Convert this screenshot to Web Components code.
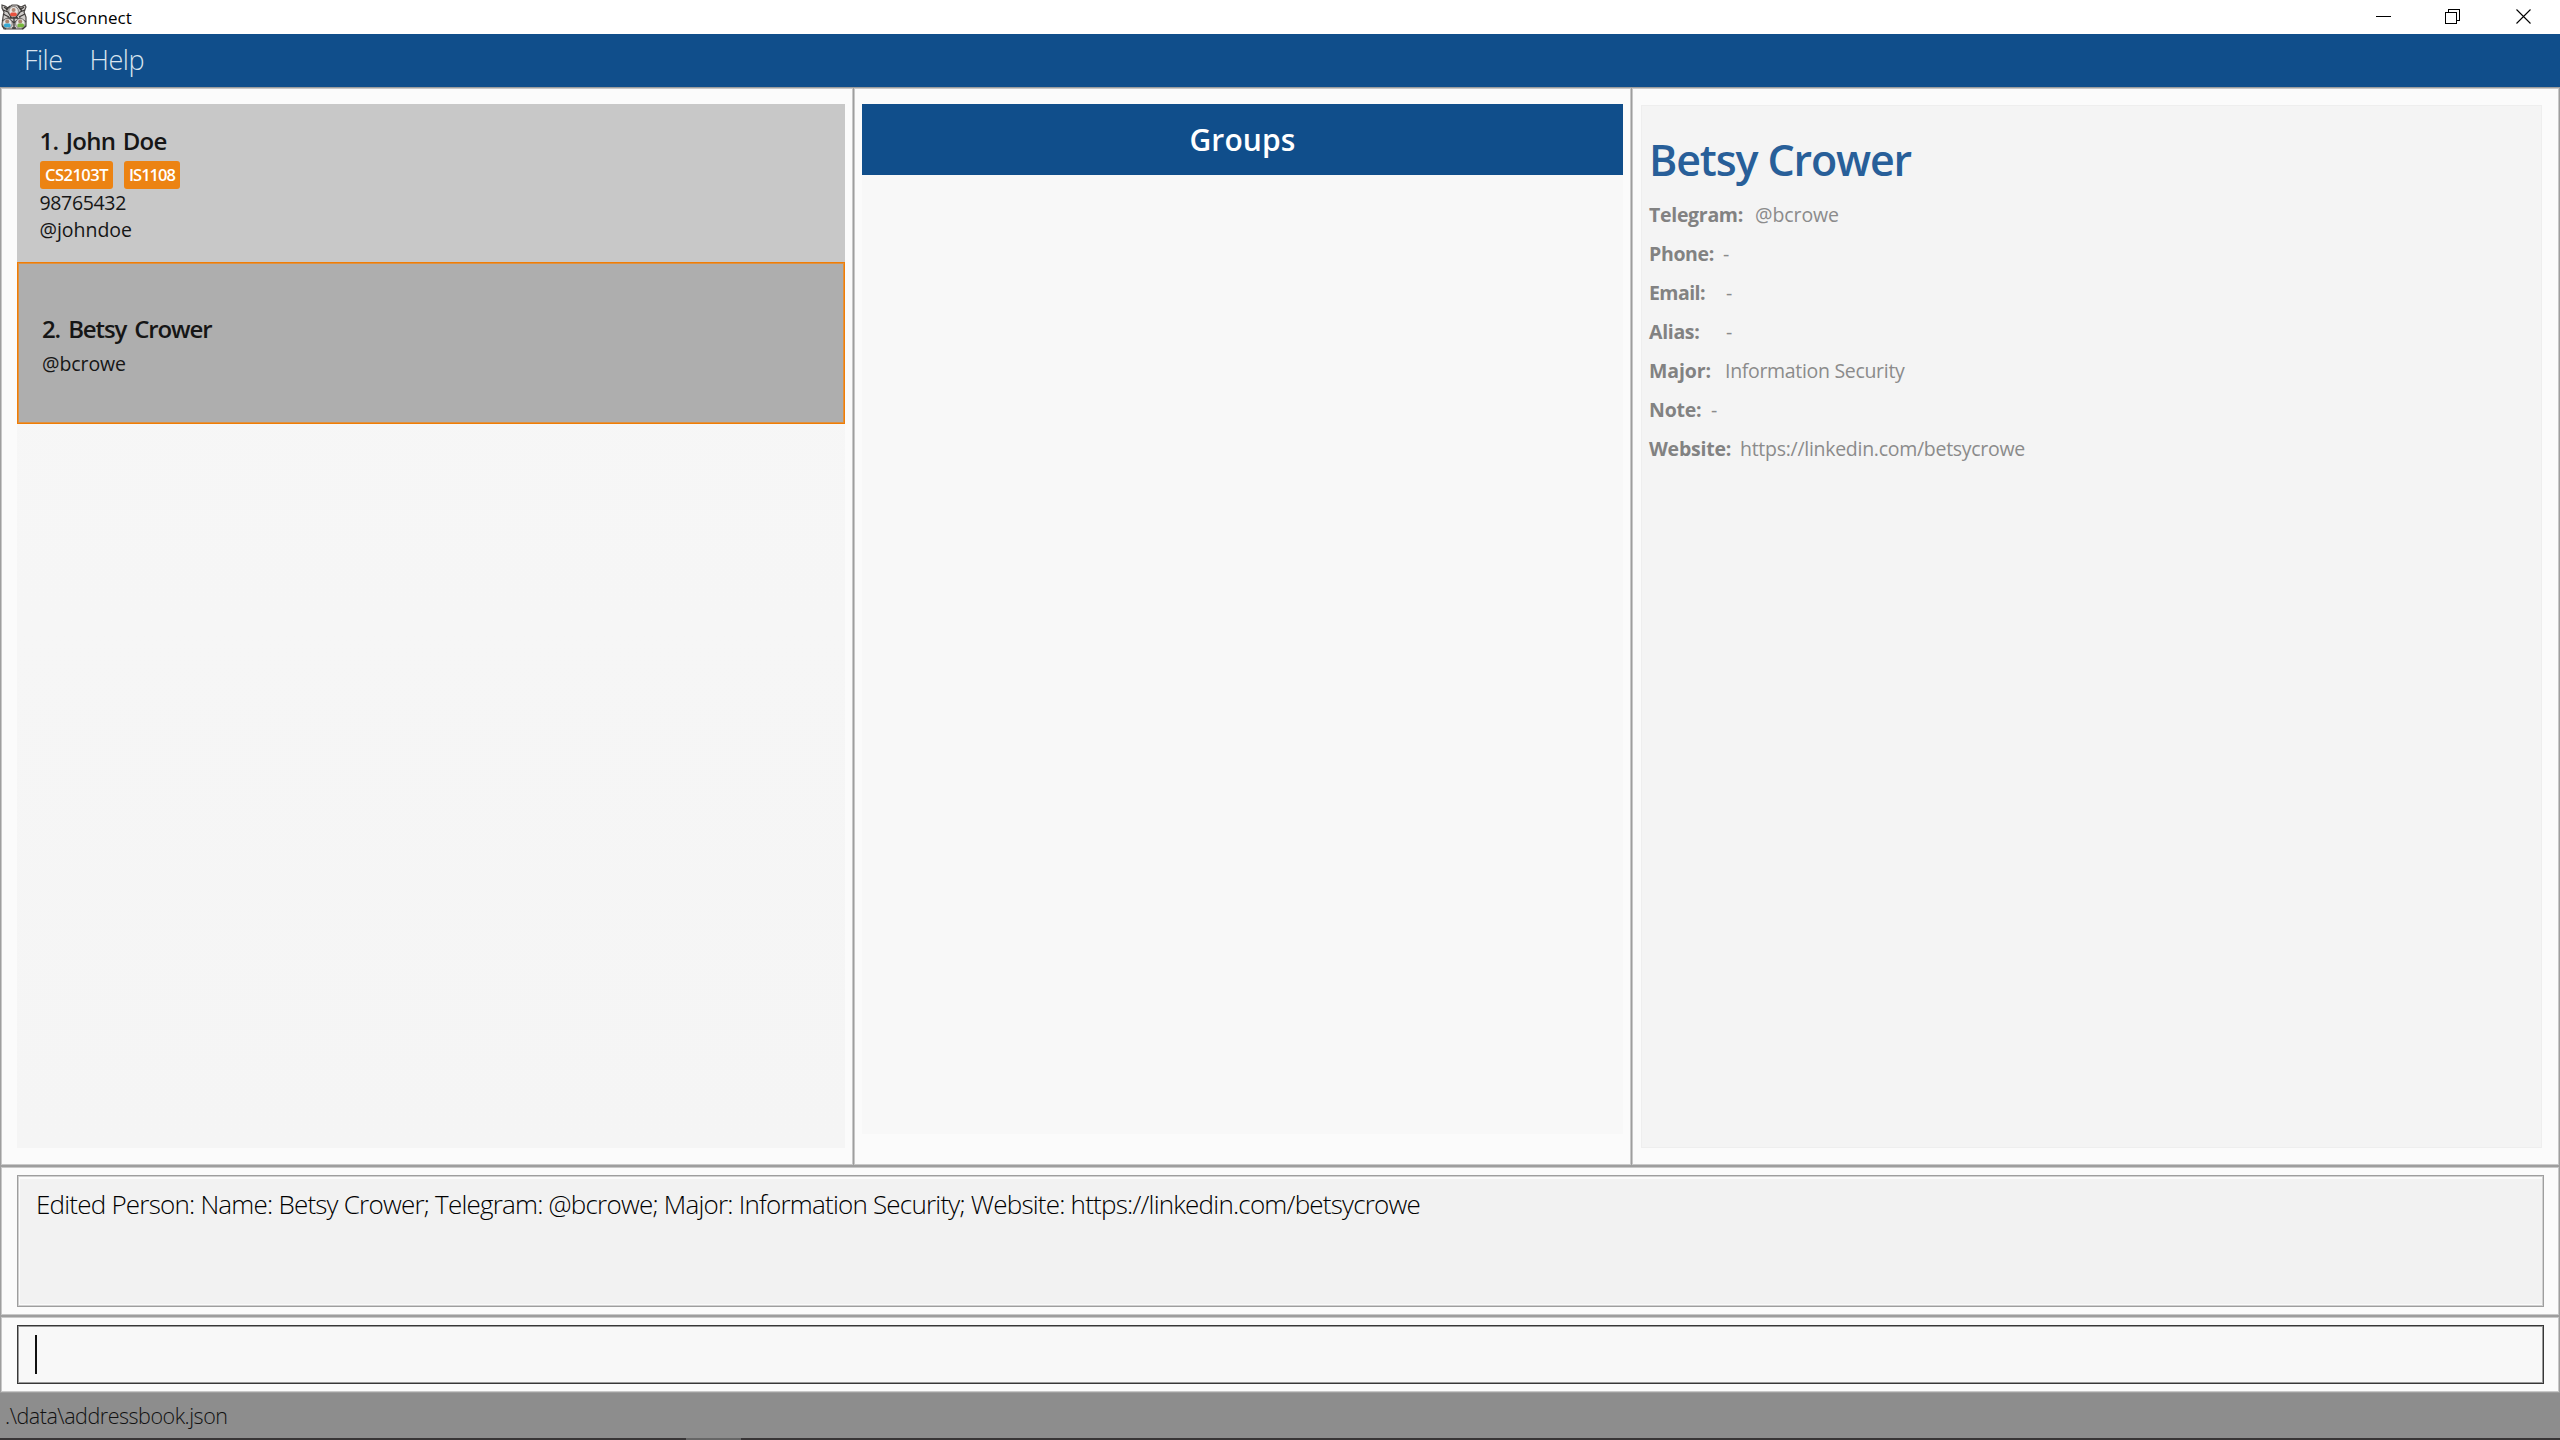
<!DOCTYPE html>
<html lang="en"><head><meta charset="utf-8"><title>NUSConnect</title>
<style>
html,body{margin:0;height:100%;overflow:hidden;background:#fbfbfb}
body{font-family:"Open Sans","Noto Sans",sans-serif;color:#1c1c1c}
</style></head><body><app-window></app-window>
<script>
const define=(name,html,init)=>{
  const t=document.createElement('template');t.innerHTML='<style>:host{display:block;box-sizing:border-box}*{box-sizing:border-box}</style>'+html;
  customElements.define(name,class extends HTMLElement{
    constructor(){super();this.attachShadow({mode:'open'}).append(t.content.cloneNode(true));}
    connectedCallback(){if(init)init.call(this,this.shadowRoot);}
  });
};

/* One line of text spread over a given width (attributes: w, size, weight, line, gap) */
define('ui-text','<style>:host{display:block;flex:none;white-space:pre}span{display:inline-block}</style><span><slot></slot></span>',function(r){
  const s=this.style,w=+this.getAttribute('w'),n=this.textContent.length,line=this.getAttribute('line');
  s.fontSize=this.getAttribute('size')+'px';s.fontWeight=this.getAttribute('weight')||400;
  s.lineHeight=line+'px';s.height=line+'px';s.wordSpacing=(this.getAttribute('gap')||0)+'px';
  const nat=r.querySelector('span').getBoundingClientRect().width;
  if(w&&n>1)s.letterSpacing=((w-nat)/n).toFixed(3)+'px';
});

define('app-logo',`<style>:host{width:26px;height:26px;flex:none}svg{display:block}</style>
<svg width="26" height="26" viewBox="0 0 26 26">
<path d="M1 1l3 1 3 2 4-3h5l4 2 4-2 1 2-2 5 2 5v9l-3 3H3l-2-4 1-8 1-5-2-4z" fill="#cfccca" stroke="#4c4846" stroke-width="1.2"/>
<path d="M2 6l5 2 3 5-6 4M24 6l-5 2-4 5 6 4M9 2l-4 4M17 2l4 5M1 17l6-3 6 5 6-5 6 4M13 13v12M1 22l4 3M25 22l-4 3M2 10l6 3M24 10l-6 3M3 3l4 3M23 3l-4 3M9 14h8M11 24h4" fill="none" stroke="#3d3a38" stroke-width="1.3"/>
<circle cx="12.600" cy="7.300" r="4.800" fill="#e9e6e4" stroke="#6b6663" stroke-width=".8"/>
<circle cx="6.400" cy="19.400" r="4.800" fill="#e9e6e4" stroke="#6b6663" stroke-width=".8"/>
<circle cx="19.400" cy="19.400" r="4.800" fill="#e9e6e4" stroke="#6b6663" stroke-width=".8"/>
<circle cx="12.600" cy="6" r="2" fill="#b08a76"/><circle cx="6.200" cy="17.500" r="2" fill="#a8826f"/><circle cx="19.200" cy="17.500" r="2" fill="#a8826f"/>
<rect x="9.200" y="8.600" width="6.600" height="3.600" rx="1.600" fill="#e8523f"/>
<rect x="3" y="19.600" width="6.600" height="3.600" rx="1.500" fill="#36a9d4"/>
<rect x="16.400" y="19.600" width="6.600" height="3.600" rx="1.500" fill="#78b83c"/></svg>`);

define('title-bar',`<style>:host{height:34px;background:#fff;display:flex;align-items:flex-start;padding-left:1px;color:#000}
app-logo{margin-top:4px}ui-text{margin:5px 0 0 4px}.c{margin-left:auto;flex:none;display:block}</style>
<app-logo></app-logo><ui-text w="101" size="17" line="25">NUSConnect</ui-text>
<svg class="c" width="184" height="34" viewBox="2376 0 184 34" fill="none" stroke="#000" shape-rendering="crispEdges">
<path d="M2376 16.5h15M2445.500 12.500h11v11h-11zM2448.500 12V9.500h11v11H2457"/><path d="M2516.500 9.500l14 14M2530.500 9.500l-14 14" stroke-width="1.1" shape-rendering="auto"/></svg>`);

define('menu-bar',`<style>:host{height:53px;background:#104e8b;color:#d9e4ee;display:flex;padding:8px 0 0 24px;gap:27px}</style>
<ui-text w="38.500" size="27" weight="300" line="35">File</ui-text><ui-text w="54.500" size="27" weight="300" line="35">Help</ui-text>`);

/* Pane with a two-tone hairline frame */
define('ui-pane',`<style>:host{border:1px solid #9e9e9e;min-width:0}
.i{height:100%;border:1px solid #c8c8c8;background:#fbfbfb;padding:var(--pad)}</style><div class="i"><slot></slot></div>`);

define('name-tag',`<style>:host{height:28px;padding:1px 5px 0;border-radius:3px;background:#ec8313;color:#fff}</style><slot></slot>`);

define('person-card',`<style>:host{padding:var(--p);background:#c8c8c8;color:#161616}
:host([selected]){background:#aeaeae;border:1px solid #f07d05;box-shadow:inset 0 0 0 1px #dd9142}
.t{display:flex;gap:11px;margin-top:var(--t)}</style><slot name="name"></slot><div class="t"><slot name="tag"></slot></div><slot></slot>`);

define('person-list',`<style>:host{height:1044px;background:linear-gradient(#f7f7f7,#f5f5f5)}
.a{--p:20px 0 0 22.5px;--t:3px;height:158px}.b{--p:49px 0 0 24px;--t:0px;height:162px}.a ui-text:not([slot]),name-tag{position:static}.a name-tag:first-of-type{margin-left:.5px}</style>
<person-card class="a"><ui-text slot="name" w="127" size="24" weight="600" line="34" gap="2">1. John Doe</ui-text>
<name-tag slot="tag"><ui-text w="63" size="16.500" weight="600" line="26">CS2103T</ui-text></name-tag>
<name-tag slot="tag"><ui-text w="46" size="16.500" weight="600" line="26">IS1108</ui-text></name-tag>
<ui-text w="86.500" size="19.500" line="27">98765432</ui-text><ui-text w="92.500" size="19.500" line="27">@johndoe</ui-text></person-card>
<person-card class="b" selected><ui-text slot="name" w="169.500" size="24" weight="600" line="34" gap="3">2. Betsy Crower</ui-text>
<ui-text w="84" size="19.500" line="35">@bcrowe</ui-text></person-card>`);

define('group-list',`<style>:host{height:1030px;background:#f8f8f8}.h{height:71px;background:#104e8b;color:#fff;display:flex;justify-content:center;padding-top:15px}</style>
<div class="h"><ui-text w="106" size="30" weight="600" line="42">Groups</ui-text></div>`);

define('detail-row',`<style>:host{display:flex;height:39px;color:#828282}ui-text+ui-text{color:#8b8b8b}</style>`,function(r){
  const mk=(t,w,wt)=>{const e=document.createElement('ui-text');e.textContent=t;e.setAttribute('w',w);e.setAttribute('size',19.5);e.setAttribute('line',39);e.setAttribute('weight',wt);r.append(e);return e};
  const g=k=>this.getAttribute(k);
  mk(g('label'),g('lw'),700);mk(g('value'),g('vw'),400).style.marginLeft=g('gap')+'px';
});
define('person-detail',`<style>:host{height:1043px;margin-top:1px;border:1px solid #eee;background:#f4f4f4;padding:24px 0 0 7px}.n{color:#285f99;margin-bottom:5px}</style>
<ui-text class="n" w="262" size="43" weight="600" line="60">Betsy Crower</ui-text>
<detail-row label="Telegram:" lw="94" gap="12" value="@bcrowe" vw="84"></detail-row>
<detail-row label="Phone:" lw="65" gap="9" value="-" vw="0"></detail-row>
<detail-row label="Email:" lw="56" gap="21" value="-" vw="0"></detail-row>
<detail-row label="Alias:" lw="50.500" gap="26.500" value="-" vw="0"></detail-row>
<detail-row label="Major:" lw="62" gap="14" value="Information Security" vw="179.500"></detail-row>
<detail-row label="Note:" lw="52.500" gap="9.500" value="-" vw="0"></detail-row>
<detail-row label="Website:" lw="82" gap="9" value="https://linkedin.com/betsycrowe" vw="285"></detail-row>`);

define('result-box',`<style>:host{height:132px;border:1px solid #9e9e9e}.i{height:100%;border:1px solid #d0d0d0;background:#f2f2f2;box-shadow:inset 0 2px #fbfbfb,inset 1px -1px #fbfbfb;padding:8px 0 0 17px;color:#000}</style>
<div class="i"><ui-text w="1384" size="26" weight="300" line="38">Edited Person: Name: Betsy Crower; Telegram: @bcrowe; Major: Information Security; Website: https://linkedin.com/betsycrowe</ui-text></div>`);
define('command-box',`<style>:host{height:59px;border:1px solid #383838}.i{height:100%;border:1px solid #999;background:#f8f8f8;padding:8px 0 0 16px}.k{width:2px;height:39px;background:#111}</style><div class="i"><div class="k"></div></div>`);
define('status-bar',`<style>:host{height:47px;background:#8d8d8d;padding-left:5px;color:#111}
.e{height:2px;margin-left:-5px;background:linear-gradient(90deg,#383536 686px,#666 686px 741px,#383536 741px)}</style><ui-text w="222.500" size="21.500" weight="300" line="45">.\\data\\addressbook.json</ui-text><div class="e"></div>`);

define('app-window',`<style>:host{width:2560px;height:1440px;display:flex;flex-direction:column;overflow:hidden}
title-bar,menu-bar,status-bar,ui-pane,.m{flex-shrink:0}
.m{height:1079px;display:grid;grid-template-columns:854px 778px 928px}
.l{--pad:15px 7px 0 15px}.g{--pad:15px 7px 0 7px;margin-left:-1px}.d{--pad:15px 16px 0 8px;margin-left:-1px}
.r{height:150px;--pad:7px 14px 0 15px}.c{height:77px;--pad:7px 14px 0 15px}</style>
<title-bar></title-bar><menu-bar></menu-bar>
<div class="m"><ui-pane class="l"><person-list></person-list></ui-pane><ui-pane class="g"><group-list></group-list></ui-pane><ui-pane class="d"><person-detail></person-detail></ui-pane></div>
<ui-pane class="r"><result-box></result-box></ui-pane><ui-pane class="c"><command-box></command-box></ui-pane><status-bar></status-bar>`);
</script></body></html>
